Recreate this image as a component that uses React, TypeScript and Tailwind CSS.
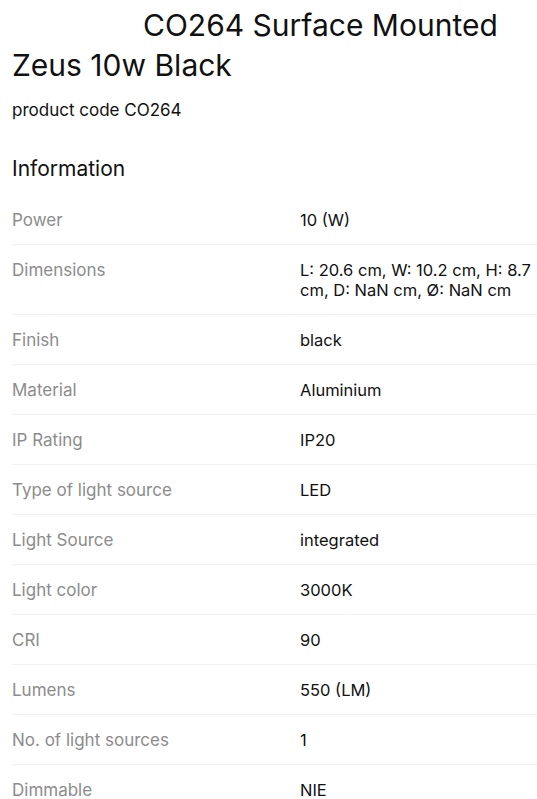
const rows: [string, string][] = [
  ["Power", "10 (W)"],
  ["Dimensions", "L: 20.6 cm, W: 10.2 cm, H: 8.7 cm, D: NaN cm, Ø: NaN cm"],
  ["Finish", "black"],
  ["Material", "Aluminium"],
  ["IP Rating", "IP20"],
  ["Type of light source", "LED"],
  ["Light Source", "integrated"],
  ["Light color", "3000K"],
  ["CRI", "90"],
  ["Lumens", "550 (LM)"],
  ["No. of light sources", "1"],
  ["Dimmable", "NIE"],
];

export default function App() {
  return (
    <div className="min-h-screen overflow-hidden bg-white pl-3 font-['Inter',sans-serif] text-[#111]">
      <h1 className="pt-[5px] text-[30px] leading-[40px] font-normal indent-[131px]">
        CO264 Surface Mounted Zeus 10w Black
      </h1>
      <p className="mt-[13px] text-[17px] leading-6">product code CO264</p>
      <h2 className="mt-[33px] text-[21px] leading-7">Information</h2>
      <div className="mt-3 w-[600px]">
        {rows.map(([label, value], i) => (
          <div
            key={label}
            className={`grid grid-cols-[288px_240px] pt-[15px] pb-[14px] text-[16.5px] leading-[20px] ${
              i < rows.length - 1 ? "border-b border-[#f0f0f0]" : ""
            }`}
          >
            <div className="text-[17px] text-[#8c8c8c]">{label}</div>
            <div>{value}</div>
          </div>
        ))}
      </div>
    </div>
  );
}
